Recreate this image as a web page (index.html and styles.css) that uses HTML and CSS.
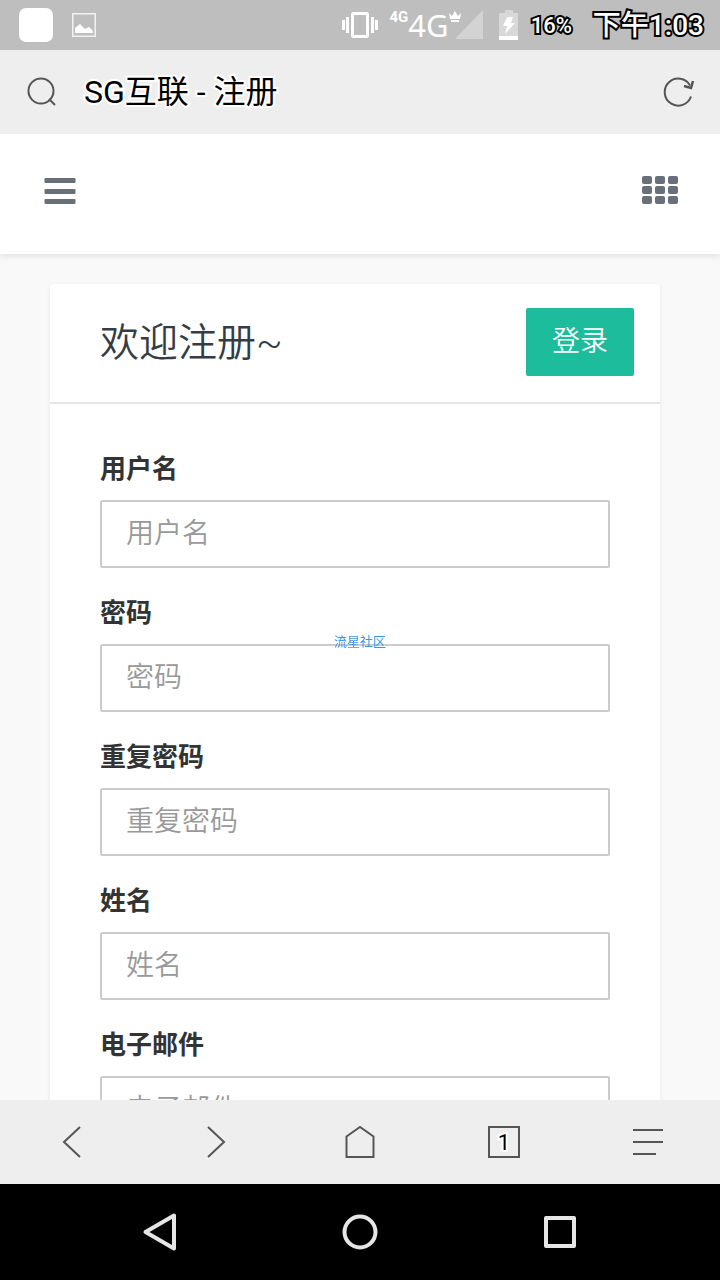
FILE: index.html
```html
<!DOCTYPE html>
<html lang="zh-CN">
  <head>
    <meta charset="utf-8" />
    <meta name="viewport" content="width=device-width, initial-scale=1" />
    <title>SG互联 - 注册</title>
    <link rel="stylesheet" href="styles.css">
  </head>
  <body>
    <div class="status-bar">
      <span class="app-icon"></span>
      <svg class="picture-icon" width="24" height="24" viewBox="0 0 24 24">
        <rect x="0.75" y="0.75" width="22.5" height="22.5" fill="none" stroke="#f2f2f2" stroke-width="1.5" />
        <path d="M3 20v-5l5-4 5 5 4-2 4 4v2z" fill="#fff" />
      </svg>
      <div class="signals">
        <svg width="36" height="28" viewBox="0 0 36 28" fill="#fff">
          <rect x="10.5" y="2.5" width="15" height="23" rx="1" fill="none" stroke="#fff" stroke-width="3" />
          <rect x="0" y="9" width="3" height="10" />
          <rect x="4" y="6" width="3" height="16" />
          <rect x="29" y="6" width="3" height="16" />
          <rect x="33" y="9" width="3" height="10" />
        </svg>
        <span class="net-small">4G</span>
        <span class="net">4G</span>
        <svg class="signal" width="34" height="30" viewBox="0 0 34 30">
          <path d="M34 0v29H6z" fill="#d3d3d3" />
          <path d="M0 3l3 3 3-5 3 5 3-3-1 6H1zM2 10h8v2H2z" fill="#fff" />
        </svg>
        <svg class="battery" width="20" height="30" viewBox="0 0 20 30">
          <path d="M6 0h8v3h5v27H0V3h6z" fill="#d8d8d8" />
          <path d="M0 26h19v4H0z" fill="#fff" />
          <path d="M8 7h6l-2 6h4L6 24l2-8H4z" fill="#fff" />
        </svg>
      </div>
      <span class="percent">16%</span>
      <span class="time">下午1:03</span>
    </div>

    <header class="address-bar">
      <button class="icon-button" type="button" aria-label="搜索">
        <svg width="30" height="30" viewBox="0 0 30 30" fill="none" stroke="#555" stroke-width="2">
          <circle cx="14" cy="14" r="12.5" />
          <path d="M22 22l6 6" />
        </svg>
      </button>
      <span class="page-title">SG互联 - 注册</span>
      <button class="icon-button" type="button" aria-label="刷新">
        <svg width="32" height="30" viewBox="0 0 32 30" fill="none" stroke="#555" stroke-width="2">
          <path d="M28 19.500a13.500 13.500 0 1 1-1-11" />
          <path d="M21 9l7 2 2-7" stroke-width="2.5" />
        </svg>
      </button>
    </header>

    <div class="page">
      <nav class="site-nav">
        <button class="icon-button" type="button" aria-label="菜单">
          <svg width="32" height="28" viewBox="0 0 32 28" fill="#69707a">
            <rect x="0.5" y="2" width="31" height="5" rx="1" />
            <rect x="0.5" y="13" width="31" height="5" rx="1" />
            <rect x="0.5" y="23" width="31" height="5" rx="1" />
          </svg>
        </button>
        <button class="icon-button" type="button" aria-label="应用">
          <svg width="36" height="28" viewBox="0 0 36 28" fill="#69707a">
            <rect x="0" y="0" width="10" height="8" rx="2" />
            <rect x="13" y="0" width="10" height="8" rx="2" />
            <rect x="26" y="0" width="10" height="8" rx="2" />
            <rect x="0" y="10" width="10" height="8" rx="2" />
            <rect x="13" y="10" width="10" height="8" rx="2" />
            <rect x="26" y="10" width="10" height="8" rx="2" />
            <rect x="0" y="20" width="10" height="8" rx="2" />
            <rect x="13" y="20" width="10" height="8" rx="2" />
            <rect x="26" y="20" width="10" height="8" rx="2" />
          </svg>
        </button>
      </nav>

      <main class="panel">
        <div class="panel-heading">
          <h1>欢迎注册~</h1>
          <a class="login" href="#login">登录</a>
        </div>
        <form class="form">
          <div class="field">
            <label for="username">用户名</label>
            <input type="text" id="username" placeholder="用户名" />
          </div>
          <div class="field">
            <label for="password">密码</label>
            <input type="password" id="password" placeholder="密码" />
          </div>
          <div class="field">
            <label for="repeat">重复密码</label>
            <input type="password" id="repeat" placeholder="重复密码" />
          </div>
          <div class="field">
            <label for="name">姓名</label>
            <input type="text" id="name" placeholder="姓名" />
          </div>
          <div class="field">
            <label for="email">电子邮件</label>
            <input type="email" id="email" placeholder="电子邮件" />
          </div>
        </form>
      </main>
    </div>

    <nav class="toolbar">
      <button type="button" aria-label="后退">
        <svg width="32" height="32" viewBox="0 0 32 32"><path d="M24 1L8 16l16 15" /></svg>
      </button>
      <button type="button" aria-label="前进">
        <svg width="32" height="32" viewBox="0 0 32 32"><path d="M8 1l16 15L8 31" /></svg>
      </button>
      <button type="button" aria-label="主页">
        <svg width="32" height="32" viewBox="0 0 32 32"><path d="M2.5 10.5L16 1l13.500 9.500V31h-27z" /></svg>
      </button>
      <button type="button" aria-label="标签页">
        <span class="tabs">1</span>
      </button>
      <button type="button" aria-label="更多">
        <svg width="32" height="32" viewBox="0 0 32 32"><path d="M1 4h30M1 16h30M1 28h23" /></svg>
      </button>
    </nav>

    <nav class="system-nav">
      <button type="button" aria-label="返回">
        <svg width="40" height="40" viewBox="0 0 40 40"><path d="M34 3.500v33L5.500 20z" /></svg>
      </button>
      <button type="button" aria-label="主屏幕">
        <svg width="40" height="40" viewBox="0 0 40 40"><circle cx="20" cy="20" r="15.500" /></svg>
      </button>
      <button type="button" aria-label="最近任务">
        <svg width="40" height="40" viewBox="0 0 40 40"><rect x="6" y="6" width="28" height="28" /></svg>
      </button>
    </nav>

    <div class="watermark">流星社区</div>
  </body>
</html>
```

FILE: styles.css
```css
* {
  box-sizing: border-box;
}

body {
  margin: 0;
  height: 100vh;
  display: flex;
  flex-direction: column;
  overflow: hidden;
  font-family: Roboto, "Noto Sans CJK SC", sans-serif;
  color: #333;
}

svg {
  display: block;
}

button {
  padding: 0;
  border: 0;
  background: none;
  cursor: pointer;
}

.status-bar {
  flex: none;
  display: flex;
  align-items: center;
  height: 50px;
  padding: 0 16px 0 19px;
  background-color: #bebebe;
  color: #fff;
}

.app-icon {
  width: 34px;
  height: 34px;
  margin-right: 19px;
  border-radius: 7px;
  background-color: #fff;
}

.signals {
  display: flex;
  align-items: center;
  margin-left: auto;
}

.net-small {
  align-self: flex-start;
  margin-left: 11px;
  font-size: 15px;
  font-weight: bold;
  line-height: 20px;
}

.net {
  font-family: "Noto Sans", sans-serif;
  font-size: 31px;
  line-height: 36px;
}

.battery {
  margin-left: 16px;
}

.percent,
.time {
  -webkit-text-stroke: 4px #000;
  paint-order: stroke fill;
}

.percent {
  margin-left: 12px;
  font-size: 22px;
  font-weight: 500;
}

.time {
  padding-bottom: 4px;
  margin-left: 21px;
  font-size: 28px;
  font-weight: 500;
}

.address-bar {
  flex: none;
  display: flex;
  align-items: center;
  height: 84px;
  padding: 0 25px 0 27px;
  background-color: #eee;
}

.page-title {
  flex: 1;
  padding-bottom: 6px;
  margin-left: 27px;
  font-size: 32px;
  color: #000;
  -webkit-text-stroke: 4px #fff;
  paint-order: stroke fill;
}

.page {
  flex: 1;
  min-height: 0;
  overflow: hidden;
  background-color: #f9f9f9;
}

.site-nav {
  display: flex;
  align-items: center;
  justify-content: space-between;
  height: 120px;
  padding: 0 42px 8px 44px;
  background-color: #fff;
  box-shadow: 0 2px 6px rgba(0, 0, 0, 0.1);
}

.panel {
  margin: 30px 60px 0 50px;
  border-radius: 4px;
  background-color: #fff;
  box-shadow: 0 2px 4px rgba(0, 0, 0, 0.08);
}

.panel-heading {
  display: flex;
  align-items: center;
  justify-content: space-between;
  height: 120px;
  padding: 0 26px 2px 50px;
  border-bottom: 2px solid #e5e5e5;
}

h1 {
  margin: 0;
  padding-bottom: 6px;
  font-size: 39px;
  font-weight: 350;
  color: #343d46;
}

.login {
  width: 108px;
  border-radius: 2px;
  background-color: #1dbc9c;
  color: #fff;
  font-size: 28px;
  font-weight: 350;
  line-height: 68px;
  text-align: center;
  text-decoration: none;
}

.form {
  padding: 46px 50px;
}

.field {
  margin-bottom: 26px;
}

label {
  display: block;
  margin-bottom: 12px;
  font-size: 26px;
  font-weight: bold;
  line-height: 38px;
}

input {
  display: block;
  width: 100%;
  height: 68px;
  padding: 0 24px 2px;
  border: 2px solid #ccc;
  border-radius: 2px;
  background-color: #fff;
  font-family: inherit;
  font-size: 28px;
  font-weight: 350;
}

input::placeholder {
  color: #999;
}

.toolbar {
  flex: none;
  display: grid;
  grid-template-columns: repeat(5, 1fr);
  height: 84px;
  background-color: #eee;
}

.toolbar button,
.system-nav button {
  display: flex;
  align-items: center;
  justify-content: center;
}

.toolbar svg {
  fill: none;
  stroke: #555;
  stroke-width: 2;
}

.tabs {
  width: 32px;
  height: 32px;
  border: 2px solid #555;
  color: #000;
  font-family: Roboto, sans-serif;
  font-size: 22px;
  line-height: 30px;
  -webkit-text-stroke: 4px #fff;
  paint-order: stroke fill;
}

.system-nav {
  flex: none;
  display: flex;
  justify-content: center;
  gap: 160px;
  height: 96px;
  background-color: #000;
}

.system-nav svg {
  fill: none;
  stroke: #e6e6e6;
  stroke-width: 4;
  stroke-linejoin: round;
}

/* lies over the page, in the middle of the screen */
.watermark {
  position: fixed;
  top: 50%;
  left: 50%;
  transform: translate(-50%, -50%);
  color: #3c96eb;
  font-size: 13px;
  pointer-events: none;
}
```
